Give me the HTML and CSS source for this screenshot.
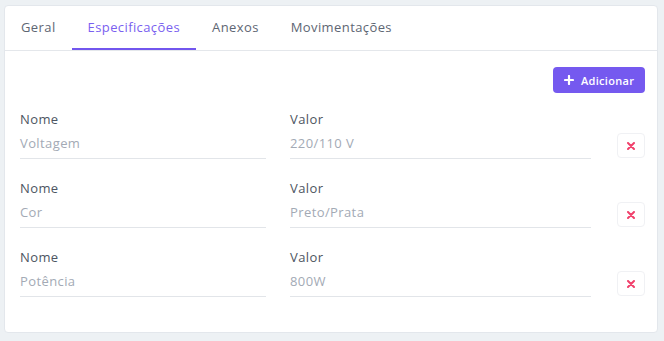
FILE: index.html
```html
<!DOCTYPE html>
<html lang="pt-BR">
<head>
    <meta charset="UTF-8">
    <meta name="viewport" content="width=device-width, initial-scale=1.0">
    <title>Especificações</title>
    <link rel="stylesheet" href="styles.css">
</head>
<body>
    <div class="card">
        <div class="tabs">
            <a class="tab">Geral</a>
            <a class="tab active">Especificações</a>
            <a class="tab">Anexos</a>
            <a class="tab">Movimentações</a>
        </div>

        <div class="content">
            <div class="toolbar">
                <button class="btn-add">
                    <svg width="10" height="10" viewBox="0 0 10 10"><path d="M5 1v8M1 5h8" stroke="#fff" stroke-width="2.2" stroke-linecap="round"/></svg>
                    Adicionar
                </button>
            </div>

            <div class="spec-row">
                <div class="field">
                    <label>Nome</label>
                    <div class="input">Voltagem</div>
                </div>
                <div class="field">
                    <label>Valor</label>
                    <div class="input">220/110 V</div>
                </div>
                <button class="btn-del"><svg width="8" height="8" viewBox="0 0 8 8"><path d="M1 1l6 6M7 1l-6 6" stroke="#f1416c" stroke-width="2" stroke-linecap="round"/></svg></button>
            </div>

            <div class="spec-row">
                <div class="field">
                    <label>Nome</label>
                    <div class="input">Cor</div>
                </div>
                <div class="field">
                    <label>Valor</label>
                    <div class="input">Preto/Prata</div>
                </div>
                <button class="btn-del"><svg width="8" height="8" viewBox="0 0 8 8"><path d="M1 1l6 6M7 1l-6 6" stroke="#f1416c" stroke-width="2" stroke-linecap="round"/></svg></button>
            </div>

            <div class="spec-row">
                <div class="field">
                    <label>Nome</label>
                    <div class="input">Potência</div>
                </div>
                <div class="field">
                    <label>Valor</label>
                    <div class="input">800W</div>
                </div>
                <button class="btn-del"><svg width="8" height="8" viewBox="0 0 8 8"><path d="M1 1l6 6M7 1l-6 6" stroke="#f1416c" stroke-width="2" stroke-linecap="round"/></svg></button>
            </div>
        </div>
    </div>
</body>
</html>
```

FILE: styles.css
```css
body {
    margin: 0;
    padding: 5px 6px 8px 4px;
    background: #edf1f4;
    font-family: "Open Sans", sans-serif;
    font-size: 13px;
    letter-spacing: 0.4px;
}
.card {
    background: #fff;
    border: 1px solid #e3e7ec;
    border-radius: 4px;
    height: 328px;
    box-sizing: border-box;
}
.tabs {
    display: flex;
    height: 45px;
    border-bottom: 1px solid #e4e7eb;
    box-sizing: border-box;
}
.tab {
    padding: 0 16px;
    line-height: 43px;
    color: #5e6673;
    border-bottom: 2px solid transparent;
}
.tab.active {
    color: #7a5ff0;
    border-bottom-color: #7256ee;
}
.content {
    padding: 16px 12px 0 15px;
}
.toolbar {
    display: flex;
    justify-content: flex-end;
    height: 26px;
    margin-bottom: 10px;
}
.btn-add {
    display: flex;
    align-items: center;
    gap: 7px;
    height: 26px;
    width: 92px;
    padding: 0 0 0 11px;
    border: none;
    border-radius: 4px;
    background: #7559ef;
    color: #fff;
    font-family: inherit;
    font-size: 11px;
    font-weight: 600;
    letter-spacing: 0.3px;
}
.spec-row {
    display: grid;
    grid-template-columns: 246px 301px 28px;
    column-gap: 24px;
    align-items: end;
    height: 69px;
}
.spec-row .btn-del {
    margin-left: 2px;
    margin-bottom: 14px;
}
.field label {
    display: block;
    color: #4d5562;
    line-height: 16px;
    margin-bottom: 7px;
}
.input {
    color: #a3aab5;
    line-height: 18px;
    padding-bottom: 6px;
    border-bottom: 1px solid #e2e5e9;
    margin-bottom: 13px;
}
.btn-del {
    width: 28px;
    height: 25px;
    padding: 0;
    border: 1px solid #f0f1f4;
    border-radius: 4px;
    background: #fff;
    display: flex;
    align-items: center;
    justify-content: center;
}
```
